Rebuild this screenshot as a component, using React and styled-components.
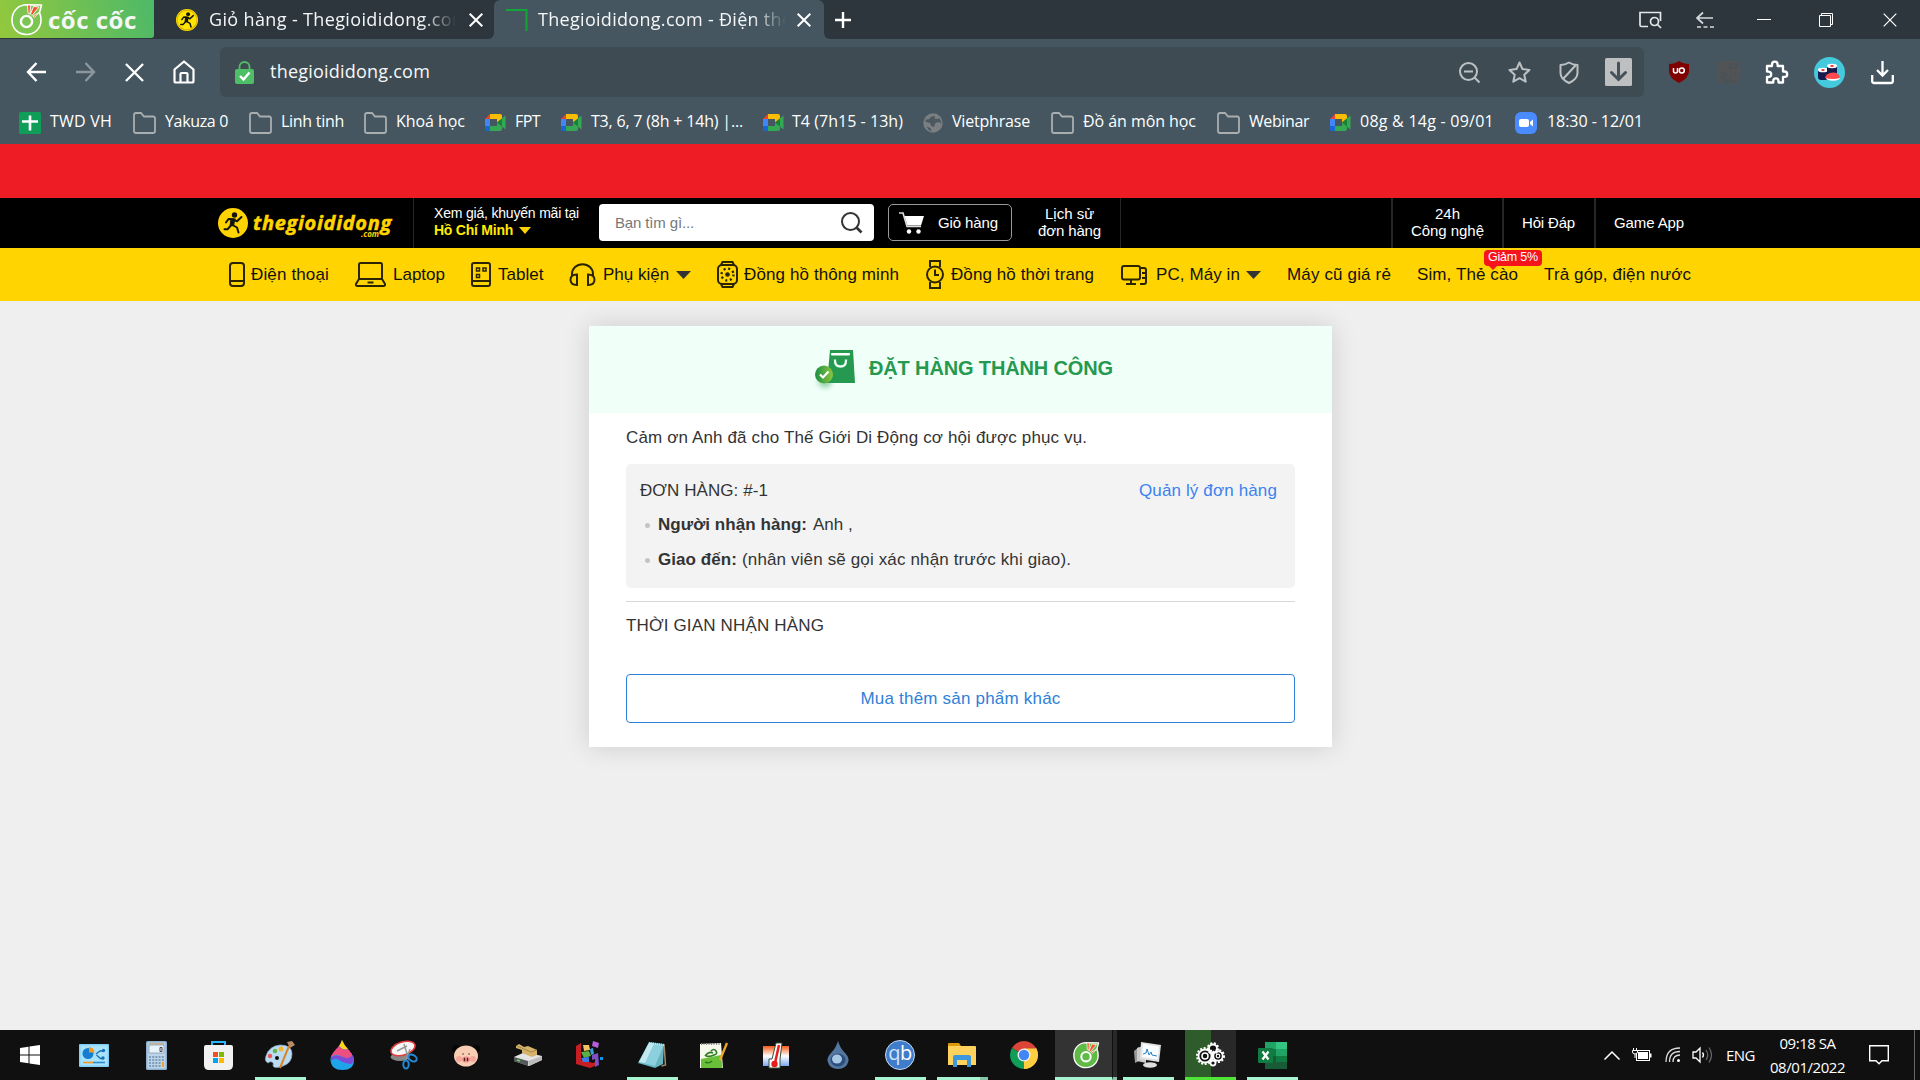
import React from "react";
import styled, { createGlobalStyle } from "styled-components";

const ui = `"Open Sans", "Noto Sans", sans-serif`;
const web = `"Liberation Sans", Arial, sans-serif`;

const Global = createGlobalStyle`
  * { box-sizing: border-box; }
  body { margin: 0; background: #efefef; overflow: hidden; }
  svg { display: block; flex: none; overflow: visible; }
`;
const Screen = styled.div`
  width: 1920px; height: 1080px; display: flex; flex-direction: column; overflow: hidden;
  background: #efefef; font-family: ${web};
`;
const Label = styled.span`
  display: block; flex: none; white-space: pre;
  width: ${(p) => p.$w}px; margin-left: ${(p) => p.$ml || 0}px; margin-top: ${(p) => p.$mt || 0}px;
  font-size: ${(p) => p.$fs}px; letter-spacing: ${(p) => p.$ls || 0}px;
  font-weight: ${(p) => (p.$bold ? 700 : 400)};
  color: ${(p) => p.$c || "inherit"}; line-height: ${(p) => p.$lh || 1.4};
`;
const Icon = styled.svg`margin-left: ${(p) => p.$ml || 0}px; margin-top: ${(p) => p.$mt || 0}px;`;
const Ic = ({ w, h, ml, mt, vb, children, ...r }) => (
  <Icon width={w} height={h} $ml={ml} $mt={mt} viewBox={vb || `0 0 ${w} ${h}`} fill="none" {...r}>{children}</Icon>
);

/* ---------- browser ---------- */
const TabStrip = styled.div`
  height: 39px; display: flex; flex: none; font-family: ${ui}; color: #f4f6f7;
  background: linear-gradient(#2c363c 50%, #455660 50%);
`;
const BrandBack = styled.div`background: #2c363c; width: 154px; flex: none;`;
const Brand = styled.div`
  width: 154px; height: 38px; flex: none; background: linear-gradient(75deg, #94c83d, #4db968);
  border-radius: 0 0 3px 0; display: flex; align-items: flex-start;
`;
const Tab = styled.div`
  width: ${(p) => p.$w}px; flex: none; display: flex; align-items: center;
  background: ${(p) => (p.$active ? "#455660" : "#2c363c")};
  border-radius: ${(p) => (p.$active ? "6px 6px 0 0" : "0 0 6px 0")};
`;
const TabTitle = styled.div`
  width: ${(p) => p.$w}px; margin-left: ${(p) => p.$ml}px; overflow: hidden; flex: none;
  mask-image: linear-gradient(90deg, #000 ${(p) => p.$w - 34}px, transparent);
`;
const StripRest = styled.div`
  flex: 1; display: flex; align-items: center; background: #2c363c; border-radius: 0 0 0 6px;
`;
const Toolbar = styled.div`
  height: 66px; flex: none; display: flex; align-items: center; padding-left: 26px; background: #455660;
  font-family: ${ui}; color: #f6f8f9;
`;
const AddressBar = styled.div`
  width: 1424px; height: 50px; margin: 0 0 0 25px; border-radius: 6px; background: #3f4b53; display: flex;
  align-items: center; padding-left: 15px; flex: none;
`;
const Bookmarks = styled.div`
  height: 39px; flex: none; display: flex; align-items: center; padding: 0 0 5px 19px; background: #455660;
  font-family: ${ui}; color: #fff;
`;

const Runner = ({ s, ml, mt, bg = "#ffd400", shade }) => (
  <Ic w={s} h={s} ml={ml} mt={mt} vb="0 0 30 30">
    <circle cx="15" cy="15" r="15" fill={bg} />
    {shade && <circle cx="15" cy="15" r="13.5" stroke="#e0b400" strokeWidth="1.5" />}
    <circle cx="16.500" cy="7" r="2.700" fill="#14140f" />
    <path d="M8 14.500l2.500-3.500 5 .3 3.500 2 4.500-4.300M14.500 17l4.500 2.500 1.500 5M12.500 18l-3 3.200H6.500" stroke="#14140f" strokeWidth="2" strokeLinecap="round" strokeLinejoin="round" />
    <path d="M12.500 10.500h5l-1.500 7.500-4.500.5z" fill="#14140f" />
  </Ic>
);
const CocLogo = ({ w, ml, mt, green }) => (
  <Ic w={w} h={w} ml={ml} mt={mt} vb="0 0 31 31">
    <path d="M16 .8C7 .8 1 7.500 1 16s6 14.500 14.500 14.500S30 24 30 16c0-3-.6-5.500-1.500-7.500L30.500 1z" fill={green ? "#5fbb46" : "#7cc551"} stroke="#fff" strokeWidth="1.600" strokeLinejoin="round" />
    <circle cx="15.500" cy="17.500" r="5.600" stroke="#fff" strokeWidth="2.400" />
    <path d="M16.500 1h3l-.5 9-2-1zM22.500 2.500L28 3l-7 8.500-1.500-1.500zM29 8l-6 5.500-1-1.500z" fill="#f4512c" stroke="#fff" strokeWidth=".9" />
  </Ic>
);
const X = ({ s = 14, ml, sw = 2, c = "#fff", mt }) => (
  <Ic w={s} h={s} ml={ml} mt={mt} vb="0 0 14 14" stroke={c} strokeWidth={sw}><path d="M.7.7l12.600 12.600M13.300.7L.7 13.300" /></Ic>
);
const Folder = ({ ml }) => (
  <Ic w={23} h={22} ml={ml} mt={1} stroke="#a9aeb0" strokeWidth="1.800"><path d="M1 19V3q0-2 2-2h5l3 3.500h9q2 0 2 2V19q0 2-2 2H3q-2 0-2-2z" /></Ic>
);
const Meet = ({ ml }) => (
  <Ic w={21} h={17} ml={ml} mt={1}>
    <path d="M5 0v5H0z" fill="#ea4335" /><path d="M0 5h5v7H0z" fill="#4285f4" /><path d="M0 12h5v5H1.500Q0 17 0 15.500z" fill="#1967d2" />
    <path d="M5 0h10q2 0 2 2v3.500L12 8.500V5H5z" fill="#fbbc04" /><path d="M5 12h7V8.500l5 3.500v3q0 2-2 2H5z" fill="#34a853" />
    <path d="M12 8.500l8.500-7V15.500z" fill="#34a853" /><path d="M12 8.500l5-4v8z" fill="#188038" />
  </Ic>
);
const Sheet = () => (
  <Ic w={22} h={22} mt={1}><rect width="22" height="22" rx="1.500" fill="#0f9d58" /><path d="M11 3.500v15M3 9.500h16" stroke="#fff" strokeWidth="2.600" /></Ic>
);
const Globe = ({ ml }) => (
  <Ic w={20} h={20} ml={ml} mt={1}><circle cx="10" cy="10" r="9.700" fill="#7b7f81" />
    <path d="M2.500 6.500Q6 7 7 5t5-2q-1 3 1 3l3.500-.5q1.500 2 2 5l-3-1.500-3 1-1.500 4-3-1q0-3-2.500-3.500-3.500 0-3-3zM3.500 13.500l4 1.500 1 3.500q-3.500-1.500-5-5z" fill="#4c585f" /></Ic>
);
const ZoomCam = ({ ml }) => (
  <Ic w={22} h={22} ml={ml} mt={1}><rect width="22" height="22" rx="6" fill="#4a8cff" /><rect x="4" y="7" width="10" height="8" rx="2" fill="#fff" /><path d="M15 10l3-2.500v7L15 12z" fill="#fff" /></Ic>
);

/* icon, gap before icon, text, text width, gap before text, letter spacing */
const bookmarks = [
  [Sheet, 0, "TWD VH", 62, 9, 0.22], [Folder, 21, "Yakuza 0", 63, 9, -0.34], [Folder, 21, "Linh tinh", 63, 9, -0.28],
  [Folder, 20, "Khoá học", 69, 9, -0.05], [Meet, 20, "FPT", 25, 9, -0.57], [Meet, 21, "T3, 6, 7 (8h + 14h) |...", 152, 9, -0.19],
  [Meet, 20, "T4 (7h15 - 13h)", 111, 8, 0.04], [Globe, 20, "Vietphrase", 78, 9, -0.19], [Folder, 21, "Đồ án môn học", 113, 9, -0.06],
  [Folder, 21, "Webinar", 60, 9, -0.4], [Meet, 21, "08g & 14g - 09/01", 134, 9, 0.24], [ZoomCam, 21, "18:30 - 12/01", 95, 10, -0.05],
];

function Browser() {
  return (
    <>
      <TabStrip>
        <BrandBack>
          <Brand>
            <CocLogo w={31} ml={11} mt={4} />
            <Label $fs={24} $w={92} $ml={6} $mt={3} $bold $ls={0.5} $lh={1.4}>cốc cốc</Label>
          </Brand>
        </BrandBack>
        <Tab $w={340}>
          <Runner s={22} ml={22} shade bg="#ffe600" />
          <TabTitle $w={247} $ml={11}><Label $fs={18} $w={280} $ls={0.36}>Giỏ hàng - Thegioididong.com</Label></TabTitle>
          <X ml={13} />
        </Tab>
        <Tab $w={330} $active>
          <Ic w={22} h={22} ml={12}><path d="M0 1h20.500v21" stroke="#13a538" strokeWidth="2" /></Ic>
          <TabTitle $w={248} $ml={10}><Label $fs={18} $w={280} $ls={0.3}>Thegioididong.com - Điện thoại</Label></TabTitle>
          <X ml={11} />
        </Tab>
        <StripRest>
          <Ic w={16} h={16} ml={11} stroke="#fff" strokeWidth="2.400"><path d="M8 0v16M0 8h16" /></Ic>
          <Ic w={23} h={18} ml={788} stroke="#e4e8ea" strokeWidth="1.700"><path d="M9 15.500H2.500Q1 15.500 1 14V1.500h20.500V10" /><circle cx="15.500" cy="10.500" r="4" /><path d="M18.500 13.500l3.500 3.500" /></Ic>
          <Ic w={18} h={16} ml={34} mt={1} stroke="#d5dadd" strokeWidth="1.700"><path d="M17 6H1M7 .5L1 6l6 5.500" /><path d="M1 15h17" strokeDasharray="4 2.500" /></Ic>
          <Ic w={14} h={2} ml={43}><path d="M0 .5h14" stroke="#fff" /></Ic>
          <Ic w={14} h={14} ml={48} stroke="#fff"><path d="M.5 2.500h11v11H.5zM2.500 2.500v-2h11v11h-2" /></Ic>
          <X ml={50} sw={1.200} />
        </StripRest>
      </TabStrip>
      <Toolbar>
        <Ic w={20} h={20} stroke="#fff" strokeWidth="2.400"><path d="M20 10H2M10.500 1L2 10l8.500 9" /></Ic>
        <Ic w={20} h={20} ml={30} stroke="#8c979d" strokeWidth="2.400"><path d="M0 10h18M9.500 1l8.500 9-8.500 9" /></Ic>
        <X s={19} ml={29} sw={1.700} />
        <Ic w={22} h={24} ml={29} stroke="#fff" strokeWidth="2.200"><path d="M1.500 9.500L11 1.500l9.500 8V21q0 1.500-1.500 1.500H3q-1.500 0-1.500-1.500z" strokeLinejoin="round" /><path d="M7.500 22v-8q0-1 1-1h5q1 0 1 1v8" /></Ic>
        <AddressBar>
          <Ic w={19} h={23}><path d="M4.500 10V6a5 5 0 0 1 10 0v4" stroke="#4fbf67" strokeWidth="1.800" /><rect y="8" width="19" height="15" rx="2" fill="#4fbf67" /><path d="M5 15l3.500 3.500 6-7" stroke="#fff" strokeWidth="2.400" /></Ic>
          <Label $fs={18} $w={160} $ml={16} $ls={0.22}>thegioididong.com</Label>
          <Ic w={21} h={21} ml={1029} stroke="#bcc1c3" strokeWidth="2"><circle cx="9.500" cy="9.500" r="8.500" /><path d="M5 9.500h9M15.500 15.500l5 5" /></Ic>
          <Ic w={23} h={22} ml={28} stroke="#bcc1c3" strokeWidth="2" strokeLinejoin="round"><path d="M11.500 1.500l3 6.600 7 .8-5.200 4.800 1.400 7-6.200-3.500-6.200 3.500 1.400-7L1.500 8.900l7-.8z" /></Ic>
          <Ic w={20} h={23} ml={28} stroke="#bcc1c3" strokeWidth="2" strokeLinejoin="round"><path d="M10 1.500q4 2.500 8.500 2.500v8q0 6-8.500 10-8.500-4-8.500-10V4Q6 4 10 1.500zM4 18L16.500 4.500" /></Ic>
          <Ic w={27} h={28} ml={26}><rect width="27" height="28" rx="1.500" fill="#bdbfc0" /><path d="M13.500 5v16M6.500 14.500l7 7 7-7" stroke="#46525a" strokeWidth="3" strokeLinecap="round" /></Ic>
        </AddressBar>
        <Ic w={20} h={22} ml={25}><path d="M10 0q4 3 10 3v7q0 7-10 12Q0 17 0 10V3q6 0 10-3z" fill="#800000" /><path d="M4.500 7v3q0 2 2 2t2-2V7" stroke="#fff" strokeWidth="1.500" /><circle cx="12.800" cy="9.500" r="2.500" stroke="#fff" strokeWidth="1.500" /></Ic>
        <Ic w={22} h={22} ml={29}><rect width="22" height="22" fill="#525354" /><path d="M12 3h7v4h-7zM3.500 12.500q4-2 5 0t-4 2.500 4 4-5 0M13 13q-2 3 0 6t6 0M19 13h-4" stroke="#485259" strokeWidth="1.400" /></Ic>
        <Ic w={24} h={24} ml={25} stroke="#fff" strokeWidth="2.300" strokeLinejoin="round"><path d="M2 6h5V4.500a2.800 2.800 0 0 1 5.600 0V6H18v5.500h1.500a2.700 2.700 0 0 1 0 5.400H18V22.500h-4.500V21a2.600 2.600 0 0 0-5.200 0v1.500H2V17h1.500a2.700 2.700 0 0 0 0-5.400H2z" /></Ic>
        <Ic w={31} h={31} ml={25}>
          <circle cx="15.500" cy="15.500" r="15.500" fill="#45c9dc" />
          <rect x="4" y="12" width="10" height="11" rx="3" fill="#171b4c" /><ellipse cx="9" cy="13" rx="5" ry="2.300" fill="#fff" /><ellipse cx="9" cy="13" rx="1.800" ry="1" fill="#e33" />
          <rect x="13" y="8" width="10" height="10" rx="3" fill="#171b4c" /><ellipse cx="18" cy="9" rx="5" ry="2.200" fill="#fff" /><ellipse cx="18" cy="9" rx="1.800" ry="1" fill="#e33" />
          <ellipse cx="19" cy="21" rx="7" ry="2.800" fill="#fff" /><path d="M11 21q1-5 8-5.500 6 0 7 5.500-7 2-15 0z" fill="#ff4a4d" />
        </Ic>
        <Ic w={23} h={23} ml={26} stroke="#fff" strokeWidth="2.300"><path d="M11.500 0v14M6 9l5.500 5.500L17 9M1.200 14v6q0 2 2 2h16.600q2 0 2-2v-6" /></Ic>
      </Toolbar>
      <Bookmarks>
        {bookmarks.map(([I, ml, text, w, gap, ls]) => (
          <React.Fragment key={text}>
            <I ml={ml} />
            <Label $fs={16} $w={w} $ml={gap} $mt={-1} $ls={ls}>{text}</Label>
          </React.Fragment>
        ))}
      </Bookmarks>
    </>
  );
}

/* ---------- site ---------- */
const Promo = styled.div`height: 54px; flex: none; background: #ee1c25;`;
const SiteHeader = styled.header`
  height: 50px; flex: none; background: #000; color: #fff; display: flex; align-items: center; padding-left: 218px;
`;
const Wordmark = styled.div`
  width: 139px; margin: 2px 0 0 5px; flex: none; color: #ffd400; display: flex; flex-direction: column;
  font-family: "Open Sans", sans-serif; font-style: italic; -webkit-text-stroke: 0.5px #ffd400;
`;
const DotCom = styled.span`font-size: 8px; font-weight: 700; line-height: 8px; margin: -3px 0 0 108px; height: 5px; -webkit-text-stroke: 0;`;
const Divider = styled.div`width: ${(p) => p.$t || 1}px; height: 50px; flex: none; background: #262626; margin-left: ${(p) => p.$ml}px;`;
const Stack = styled.div`
  display: flex; flex-direction: column; flex: none; align-items: ${(p) => (p.$center ? "center" : "flex-start")};
  width: ${(p) => p.$w}px; margin-left: ${(p) => p.$ml}px; margin-top: -2px;
`;
const Line = styled.div`display: flex; align-items: center; height: 17px;`;
const Search = styled.div`
  width: 275px; height: 37px; margin: -1px 0 0 20px; border-radius: 4px; background: #fff; display: flex; align-items: center; flex: none;
  padding-left: 16px;
`;
const CartButton = styled.div`
  width: 124px; height: 37px; margin: -1px 0 0 14px; border-radius: 5px; border: 1px solid #999; display: flex; align-items: center; flex: none;
  padding-left: 10px;
`;
const Nav = styled.nav`
  height: 53px; flex: none; background: #ffd400; color: #111; display: flex; align-items: center; padding-left: 229px;
`;
const BadgeAnchor = styled.div`position: relative; flex: none; margin-left: 26px;`;
const Badge = styled.div`
  position: absolute; left: 67px; top: -13px; width: 58px; height: 16px; border-radius: 4px; background: #f5141c; color: #fff;
  display: flex; align-items: center; padding-left: 4px;
  &::after { content: ""; position: absolute; left: 5px; top: 16px; border: 4px solid transparent; border-top: 4px solid #f5141c; border-bottom: 0; }
`;
const Caret = ({ ml, w = 15, c = "#333", h = 8 }) => <Ic w={w} h={h} ml={ml}><path d={`M0 0h${w}L${w / 2} ${h}z`} fill={c} /></Ic>;
const dark = { stroke: "#2b2400", strokeWidth: 2 };

function Site() {
  return (
    <>
      <Promo />
      <SiteHeader>
        <Runner s={30} />
        <Wordmark><Label $fs={20} $w={139} $bold $lh={1} $ls={0.68}>thegioididong</Label><DotCom>.com</DotCom></Wordmark>
        <Divider $ml={21} />
        <Stack $w={145} $ml={20}>
          <Line><Label $fs={14} $w={145} $ls={-0.19}>Xem giá, khuyến mãi tại</Label></Line>
          <Line><Label $fs={14} $w={79} $bold $c="#ffea00" $ls={-0.24}>Hồ Chí Minh</Label><Caret ml={6} w={12} h={7} c="#ffd400" /></Line>
        </Stack>
        <Search>
          <Label $fs={15} $w={79} $c="#777" $ls={-0.14}>Bạn tìm gì...</Label>
          <Ic w={21} h={21} ml={147} stroke="#333" strokeWidth="2"><circle cx="9.500" cy="9.500" r="8.500" /><path d="M15.500 15.500l5 5" strokeWidth="2.600" /></Ic>
        </Search>
        <CartButton>
          <Ic w={25} h={22}><path d="M0 1h4l4 13.500h14" stroke="#ddd" strokeWidth="1.600" /><path d="M5.500 4H25l-3 9.500H8.500z" fill="#fff" /><circle cx="10" cy="19.500" r="2.200" fill="#fff" /><circle cx="19.500" cy="19.500" r="2.200" fill="#fff" /></Ic>
          <Label $fs={15} $w={60} $ml={14} $ls={-0.11}>Giỏ hàng</Label>
        </CartButton>
        <Stack $w={63} $ml={26} $center>
          <Line><Label $fs={15} $w={49}>Lịch sử</Label></Line>
          <Line><Label $fs={15} $w={63} $ls={-0.13}>đơn hàng</Label></Line>
        </Stack>
        <Divider $ml={19} />
        <Divider $ml={270} $t={2} />
        <Stack $w={73} $ml={18} $center>
          <Line><Label $fs={15} $w={25}>24h</Label></Line>
          <Line><Label $fs={15} $w={73} $ls={-0.05}>Công nghệ</Label></Line>
        </Stack>
        <Divider $ml={18} $t={2} />
        <Label $fs={15} $w={53} $ml={18} $mt={-2} $ls={-0.17}>Hỏi Đáp</Label>
        <Divider $ml={19} $t={2} />
        <Label $fs={15} $w={70} $ml={18} $mt={-2} $ls={-0.11}>Game App</Label>
      </SiteHeader>
      <Nav>
        <Ic w={16} h={25} {...dark}><rect x="1" y="1" width="14" height="23" rx="3" /><path d="M1 19h14" /></Ic>
        <Label $fs={17} $w={78} $ml={6} $ls={0.14}>Điện thoại</Label>
        <Ic w={31} h={25} ml={26} {...dark}><path d="M4 17V2.500Q4 1 5.500 1h20Q27 1 27 2.500V17L30 22q.5 2-1.500 2h-26Q.5 24 1 22zM4 17h23M12.500 20.500h6" /></Ic>
        <Label $fs={17} $w={52} $ml={7}>Laptop</Label>
        <Ic w={20} h={25} ml={26} {...dark}><rect x="1" y="1" width="18" height="23" rx="2" /><path d="M1 19h18" /><path d="M5.500 6h3v3h-3zM12 6h3v3h-3zM5.500 12.500h3v3h-3z" strokeWidth="1.500" /></Ic>
        <Label $fs={17} $w={45} $ml={7}>Tablet</Label>
        <Ic w={27} h={23} ml={26} {...dark}><path d="M3 13V11a10.500 9.800 0 0 1 21 0v2M8 11.500v10.500q-6.500 0-6.500-5.200T8 11.500zM19 11.500v10.500q6.500 0 6.500-5.200t-6.500-5.300z" /></Ic>
        <Label $fs={17} $w={66} $ml={7}>Phụ kiện</Label>
        <Caret ml={7} />
        <Ic w={21} h={27} ml={26} {...dark}><rect x="1" y="4" width="19" height="19" rx="4" /><path d="M4 4L5.500 1h10L17 4M4 23l1.500 3h10l1.500-3" /><circle cx="10.500" cy="13.500" r="2.300" fill="#2b2400" strokeWidth="0" /><circle cx="10.500" cy="13.500" r="6" strokeDasharray="2 2.710" strokeWidth="2.300" /></Ic>
        <Label $fs={17} $w={155} $ml={6} $ls={0.11}>Đồng hồ thông minh</Label>
        <Ic w={18} h={29} ml={27} {...dark}><circle cx="9" cy="14.500" r="8" /><path d="M4 7V1h10v6M4 22v6h10v-6M9 9.500v5.500h4" /></Ic>
        <Label $fs={17} $w={143} $ml={7} $ls={0.08}>Đồng hồ thời trang</Label>
        <Ic w={28} h={20} ml={27} {...dark}><rect x="1" y="1" width="18" height="13.500" rx="2" /><path d="M10 14.500V19M5 19h10M20 3h3q2 0 2 2v12q0 2-2 2h-4M21 8h4M21 13h4" /></Ic>
        <Label $fs={17} $w={84} $ml={7} $ls={0.09}>PC, Máy in</Label>
        <Caret ml={6} />
        <Label $fs={17} $w={104} $ml={26} $ls={0.15}>Máy cũ giá rẻ</Label>
        <BadgeAnchor>
          <Label $fs={17} $w={101} $ls={0.1}>Sim, Thẻ cào</Label>
          <Badge><Label $fs={12.5} $w={50} $ls={-0.2}>Giảm 5%</Label></Badge>
        </BadgeAnchor>
        <Label $fs={17} $w={147} $ml={26} $ls={0.13}>Trả góp, điện nước</Label>
      </Nav>
    </>
  );
}

const Main = styled.main`flex: 1; display: flex; justify-content: center; align-items: flex-start; padding: 25px 0 0 1px;`;
const Card = styled.section`
  width: 743px; height: 421px; background: #fff; box-shadow: 0 0 25px rgba(0, 0, 0, 0.14); color: #333;
  display: flex; flex-direction: column; padding: 0 37px;
`;
const CardHead = styled.div`
  height: 87px; margin: 0 -37px; background: #f0fff8; display: flex; align-items: center; padding-left: 226px; color: #24994f; flex: none;
`;
const OrderBox = styled.div`
  height: 124px; flex: none; border-radius: 5px; background: #f3f3f3; margin-top: 2px; padding: 10px 18px 0 14px;
`;
const Row = styled.div`display: flex; align-items: center; height: ${(p) => p.$h}px; flex: none; justify-content: ${(p) => (p.$between ? "space-between" : "flex-start")};`;
const Bullet = styled.i`width: 5px; height: 5px; border-radius: 50%; background: #c4c4c4; margin: 0 8px 0 5px; flex: none;`;
const Rule = styled.hr`border: 0; height: 1px; width: 100%; background: #d8d8d8; margin: 13px 0 0; flex: none;`;
const MoreButton = styled.button`
  height: 49px; width: 100%; margin-top: 25px; background: #fff; border: 1px solid #2f80d8; border-radius: 4px; color: #2f80d8; font-family: ${web};
  display: flex; align-items: center; justify-content: center; padding: 0; flex: none;
`;
function Order() {
  return (
    <Main>
      <Card>
        <CardHead>
          <Ic w={40} h={42} mt={2}>
            <defs><linearGradient id="tick"><stop offset="0" stopColor="#1b8f45" /><stop offset="1" stopColor="#8cc63a" /></linearGradient>
              <filter id="soft" x="-50%" y="-50%" width="200%" height="200%"><feGaussianBlur stdDeviation="2.500" /></filter></defs>
            <path d="M15 0h23l2 33H12z" fill="#24994f" /><rect x="16" y="3" width="19" height="2.500" rx="1" fill="#fff" />
            <path d="M20 9.500v1q0 6 5.500 6t5.500-6v-1" stroke="#eafff3" strokeWidth="2.300" />
            <circle cx="10" cy="31" r="7" fill="#24994f" opacity=".4" filter="url(#soft)" />
            <circle cx="9" cy="24.500" r="9" fill="url(#tick)" /><path d="M5 24.500l3 3 5.500-6" stroke="#fff" strokeWidth="2.200" />
          </Ic>
          <Label $fs={20} $w={244} $ml={14} $mt={-3} $bold $ls={-0.14}>ĐẶT HÀNG THÀNH CÔNG</Label>
        </CardHead>
        <Row $h={49}><Label $fs={17} $w={461} $ls={0.14}>Cảm ơn Anh đã cho Thế Giới Di Động cơ hội được phục vụ.</Label></Row>
        <OrderBox>
          <Row $h={34} $between><Label $fs={17} $w={128} $ls={0.08}>ĐƠN HÀNG: #-1</Label><Label $fs={17} $w={138} $c="#3b82f0" $ls={0.13}>Quản lý đơn hàng</Label></Row>
          <Row $h={34}><Bullet /><Label $fs={17} $w={149} $bold $ls={0.06}>Người nhận hàng:</Label><Label $fs={17} $w={40} $ml={6}>Anh ,</Label></Row>
          <Row $h={36}><Bullet /><Label $fs={17} $w={79} $bold $ls={0.07}>Giao đến:</Label><Label $fs={17} $w={329} $ml={5} $ls={0.14}>(nhân viên sẽ gọi xác nhận trước khi giao).</Label></Row>
        </OrderBox>
        <Rule />
        <Row $h={47}><Label $fs={17} $w={198} $ls={0.16}>THỜI GIAN NHẬN HÀNG</Label></Row>
        <MoreButton><Label $fs={17} $w={200} $ls={0.2}>Mua thêm sản phẩm khác</Label></MoreButton>
      </Card>
    </Main>
  );
}

/* ---------- taskbar ---------- */
const Taskbar = styled.footer`height: 50px; flex: none; display: flex; align-items: stretch; background: #101010; color: #fff; font-family: ${ui};`;
const Slot = styled.div`
  width: ${(p) => (p.$first ? 60 : 62)}px; margin-right: ${(p) => (p.$first ? 3 : 0)}px; flex: none; display: flex; justify-content: center; align-items: stretch;
`;
const Cell = styled.div`
  width: ${(p) => (p.$wide ? 57 : 51)}px; display: flex; align-items: center; justify-content: center; flex: none;
  background: ${(p) => p.$bg || "transparent"}; border-bottom: 3px solid ${(p) => p.$line || "transparent"}; padding-top: 3px;
  padding-left: ${(p) => (p.$wide ? 4 : 0)}px;
  ${(p) => p.$grouped && "border-image: linear-gradient(90deg, #a6f4d0 80%, #86c5a8 80%) 3;"}
`;
const Stacked = styled.div`width: 5px; flex: none; background: #292929; border-left: 1px solid #101010; border-bottom: 3px solid #86c5a8;`;
const Tray = styled.div`flex: 1; display: flex; align-items: center; padding-left: 301px;`;
const Clock = styled.div`width: 75px; margin-left: 16px; display: flex; flex-direction: column; align-items: center; gap: 1px; flex: none;`;
const Edge = styled.div`width: 1px; height: 50px; background: #666; margin-left: 25px;`;
const QbDisc = styled.div`
  width: 30px; height: 30px; border-radius: 50%; background: #3f7cc9; border: 1.5px solid #c3dbf5; color: #cfe4fb;
  font: 20px/23px "Open Sans", sans-serif; text-align: center; letter-spacing: -0.5px;
  b { font-weight: 400; color: #fff; }
`;

const mint = "#a6f4d0";
const apps = [
  { icon: <Ic w={20} h={20}><path d="M0 3l8.500-1.300v7.800H0zM9.500 1.500L20 0v9.500H9.500zM0 10.500h8.500v7.800L0 17zM9.500 10.500H20V20L9.500 18.500z" fill="#fff" /></Ic> },
  { icon: <Ic w={30} h={23}><rect width="30" height="23" rx="1" fill="#7fd0f7" /><rect x="1.500" y="1.500" width="27" height="20" fill="#a9e2fb" /><circle cx="9" cy="9.500" r="5.500" fill="#167ed0" /><path d="M10 8.500V3a5.500 5.500 0 0 1 5.500 5.500z" fill="#f39a1d" /><path d="M17 10l4-3h4M17.500 11l4 3.500h3" stroke="#1571ba" strokeWidth="1.300" /><circle cx="24.500" cy="6.500" r="1.700" fill="#1571ba" /><circle cx="24" cy="14" r="1.700" fill="#1571ba" /><path d="M4 18.500h10" stroke="#f39a1d" strokeWidth="1.600" /><path d="M14 18.500h12" stroke="#2a8bd0" strokeWidth="1.600" /></Ic> },
  { icon: <Ic w={21} h={29}><rect width="21" height="29" rx="1.500" fill="#8fb0cf" /><rect x="1.500" y="1.500" width="18" height="26" fill="#bcd5ea" /><rect x="3" y="4" width="15" height="8" fill="#e8f3fb" stroke="#6d8296" strokeWidth=".6" /><path d="M3 2.800h15" stroke="#d0a060" /><path d="M14 6.500h2v4h-2z" stroke="#445" /><path d="M3 16h15M3 19h15M3 22h12M3 25h12" stroke="#7f9cb8" strokeWidth="2" strokeDasharray="2 1.200" /><path d="M17 21v5" stroke="#f0a030" strokeWidth="2" /></Ic> },
  { icon: <Ic w={29} h={29}><path d="M8 5V1h13v4" stroke="#29b6f6" strokeWidth="2" /><path d="M0 6q0-2 2-2h25q2 0 2 2v18q0 5-5 5H5q-5 0-5-5z" fill="#f1f1f1" /><path d="M9 11h5v5H9z" fill="#f25022" /><path d="M15 11h5v5h-5z" fill="#7fba00" /><path d="M9 17h5v5H9z" fill="#00a4ef" /><path d="M15 17h5v5h-5z" fill="#ffb900" /></Ic> },
  { icon: <Ic w={30} h={28}><path d="M1 15Q4 5 15 4q12 0 12 9t-9 12q-8 3-10 0 1-3-1-4t-4 1q-4-2-2-7z" fill="#b9dcf2" stroke="#86aac6" strokeWidth=".7" /><circle cx="12" cy="17" r="2" fill="#101010" /><circle cx="5" cy="15" r="2.200" fill="#e55" /><circle cx="10" cy="10" r="2.300" fill="#64b64c" /><circle cx="16" cy="8" r="2.500" fill="#f7b731" /><path d="M15 27L24 5" stroke="#d98527" strokeWidth="2" /><path d="M22 1l5-1 3 4-5 3z" fill="#b98d63" /></Ic>, line: mint },
  { icon: <Ic w={24} h={30}><path d="M12 0q2 6 7 11 5 5 5 9 0 10-11.500 10T.5 20Q0 16 5 11q6-6 7-11z" fill="#1ea4e9" /><path d="M9 6q2-3 3-6 2 5 6 9-4 2-9-3z" fill="#ffd21f" /><path d="M9 6q4 5 9 3l4 5q-2 7-9 3T1 17q1-4 8-11z" fill="#ee4f80" /><path d="M1 17q6-3 12 0t10-2q2 7-2 9-8-1-12-4t-8 1z" fill="#7d4bd8" /></Ic> },
  { icon: <Ic w={28} h={28}><ellipse cx="10" cy="16" rx="9.500" ry="4" fill="#888" /><ellipse cx="13" cy="7.500" rx="12.500" ry="6.500" transform="rotate(-18 13 7.500)" fill="#f7f7f7" stroke="#e23d3d" strokeWidth="1.500" /><path d="M7 10l10-5M14 3l5 16M20 8l-4 11" stroke="#999" strokeWidth="1.500" /><ellipse cx="22.500" cy="17" rx="4.500" ry="3" stroke="#2389d6" strokeWidth="2" transform="rotate(30 22.500 17)" /><ellipse cx="16" cy="23.500" rx="2.700" ry="4" stroke="#2389d6" strokeWidth="2" /></Ic> },
  { icon: <Ic w={28} h={24}><circle cx="4" cy="6" r="4" fill="#050505" /><circle cx="24" cy="6" r="4" fill="#050505" /><ellipse cx="14" cy="13" rx="12" ry="10.500" fill="#f7cdb4" /><circle cx="7" cy="16" r="3" fill="#f5a79c" /><circle cx="21" cy="16" r="3" fill="#f5a79c" /><ellipse cx="14" cy="16.500" rx="4" ry="3" fill="#ee8a88" /><path d="M12.500 15.500v2M15.500 15.500v2M11 11h.1M17 11h.1" stroke="#4d2018" strokeWidth="1.300" strokeLinecap="round" /></Ic> },
  { icon: <Ic w={28} h={24}><path d="M0 14l11-5 17 4v4l-13 6-15-5z" fill="#e4e4e4" /><path d="M0 14l14 4v5L0 18z" fill="#55595b" /><path d="M14 18l14-5v4l-13 6z" fill="#bbb" /><path d="M2 3l3-2 5 3 4-1 9 4v5l-5 2-10-4V7L2 5z" fill="#d5b36b" /><path d="M3 3l14 6 6-2" stroke="#a98643" /><path d="M3 17l3 1" stroke="#5ddb42" strokeWidth="1.500" /></Ic> },
  { icon: <Ic w={28} h={28}><path d="M0 5l5-3v17l12 3 4-2v4l-7 3L0 23z" fill="#c51f25" /><path d="M7 4h6l1 5-6 1z" fill="#f5c164" /><path d="M17 0l6 2-1 5-6-2z" fill="#b75cdb" /><path d="M5 11l8-1 2 5-7 2z" fill="#5ab045" /><path d="M5 17l8-1v5H7z" fill="#3b7de5" /><path d="M14 8l3-1 1 6-3 1z" fill="#35a0d8" /><path d="M16 14l6-2 1 12-4 2v-8l-3 1z" fill="#814fc4" /><path d="M24 16h3v3h-3z" fill="#0998e8" /></Ic> },
  { icon: <Ic w={29} h={26}><path d="M11 0l15 2-1 20-8 4L0 21z" fill="#65b4c1" /><path d="M11 1l15 2-9 21L1 20z" fill="#8bd0dc" /><path d="M11 1l5 .5L7 21l-6-1z" fill="#c4eaf0" /><path d="M26 2l1.500 21-4 1" stroke="#9e8a69" strokeWidth="1.500" /><path d="M11 1l15 2" stroke="#ddd" strokeWidth="2" strokeDasharray="1 1" /></Ic>, line: mint },
  { icon: <Ic w={28} h={27}><path d="M0 2l21-1 2 25H0z" fill="#f6faec" /><path d="M1 17l20-4 1.500 13H1z" fill="#69bf37" /><path d="M5 14q4-5 8-3M11 9q3-3 5 0t-2 4q-4 2-8 1M5 20q4 2 7-1" stroke="#2f7c20" strokeWidth="1.600" /><path d="M1 2h20" stroke="#888" strokeDasharray="1 1.500" strokeWidth="2" /><path d="M20 18L27 1" stroke="#f3a52a" strokeWidth="2.300" /></Ic> },
  { icon: <Ic w={26} h={27}><defs><linearGradient id="heat" x2="0" y2="1"><stop stopColor="#f15a18" /><stop offset=".5" stopColor="#fff" /><stop offset="1" stopColor="#7ba6ef" /></linearGradient></defs><path d="M0 4h26v20H0z" fill="url(#heat)" /><path d="M13 1h6l-2 16v9H6v-9h3z" fill="#fff" stroke="#31503a" strokeWidth="1" /><path d="M16 3l-4 18" stroke="#e91c1c" strokeWidth="2.500" /><circle cx="11.500" cy="22" r="3.200" fill="#e91c1c" /></Ic> },
  { icon: <Ic w={22} h={28}><path d="M11 0q2 7 7 12 4 4 3.500 8-2 8-10.500 8T.5 20Q0 16 4 12q5-5 7-12z" fill="#54779f" /><ellipse cx="11" cy="19" rx="7.500" ry="6.500" fill="#2b4e7b" /><ellipse cx="10" cy="18" rx="5" ry="4.500" fill="#a8c8e6" /></Ic> },
  { icon: <QbDisc>q<b>b</b></QbDisc>, line: mint },
  { icon: <Ic w={28} h={24}><path d="M0 1q0-1 1-1h10l2 3H0z" fill="#dc9a0a" /><path d="M0 3h27q1 0 1 1v18H0z" fill="#ffd35b" /><path d="M5 24V14q0-2 2-2h14q2 0 2 2v10h-4v-7H9v7z" fill="#3c97dc" /></Ic>, line: mint, grouped: true },
  { icon: <Ic w={28} h={28}><path d="M14 14L1.900 7A14 14 0 0 1 26.100 7z" fill="#db4437" /><path d="M14 14L26.100 7A14 14 0 0 1 14 28z" fill="#ffcd40" /><path d="M14 14l0 14A14 14 0 0 1 1.900 7z" fill="#0f9d58" /><path d="M14 7.500h12.300A14 14 0 0 1 14 28l5.800-10.500z" fill="#ffcd40" /><circle cx="14" cy="14" r="6.500" fill="#f1f1f1" /><circle cx="14" cy="14" r="5.200" fill="#4285f4" /></Ic> },
  { icon: <CocLogo w={26} green />, line: mint, bg: "#333", windows: true },
  { icon: <Ic w={28} h={26}><path d="M0 9l5-4v14l-4 2z" fill="#999" /><path d="M3 6l9-3v18l-9-2z" fill="#ccc" /><path d="M7 0l20 3-2 17-19-3z" fill="#e2e2e2" /><path d="M9 2l16 2.500-1.500 13L8 15z" fill="#f9fdff" /><path d="M9 12l3-1 1-4 2 6 2-3 1 3 5 1" stroke="#2684c6" /><ellipse cx="16" cy="23" rx="7" ry="2.800" fill="#ddd" /></Ic>, line: mint },
  { icon: <Ic w={28} h={24}><g stroke="#fff" strokeWidth="1.800" fill="#111"><circle cx="9" cy="13" r="6.500" /><circle cx="17" cy="5.500" r="4" /><circle cx="22" cy="13" r="4.700" /><circle cx="17" cy="20" r="2.500" /></g><g stroke="#fff" strokeWidth="2" strokeDasharray="2 1.600"><circle cx="9" cy="13" r="8" /><circle cx="17" cy="5.500" r="5.300" /><circle cx="22" cy="13" r="6" /></g><circle cx="9" cy="13" r="3" stroke="#fff" strokeWidth="1.500" /><circle cx="22" cy="13" r="1.800" stroke="#fff" strokeWidth="1.200" /></Ic>, line: "#4ee536", bg: "linear-gradient(90deg, #2f5c2b 50%, #282828 50%)" },
  { icon: <Ic w={29} h={27}><path d="M7 0h22v27H7z" fill="#185c37" /><path d="M7 0h11v7H7z" fill="#21a366" /><path d="M18 0h11v7H18z" fill="#33c481" /><path d="M7 7h11v7H7zM18 14h11v6H18z" fill="#107c41" /><path d="M18 7h11v7H18z" fill="#21a366" /><rect y="6" width="15" height="15" rx="1" fill="#107c41" /><path d="M4.500 9.500l6 8M10.500 9.500l-6 8" stroke="#fff" strokeWidth="2.200" /></Ic>, line: mint },
];

function Bar() {
  return (
    <Taskbar>
      {apps.map((app, i) => (
        <Slot key={i} $first={i === 0}>
          <Cell $line={app.line} $bg={app.bg} $grouped={app.grouped} $wide={app.windows}>{app.icon}</Cell>
          {app.windows && <Stacked />}
        </Slot>
      ))}
      <Tray>
        <Ic w={16} h={9} stroke="#fff" strokeWidth="1.500"><path d="M.5 8.500L8 1l7.500 7.500" /></Ic>
        <Ic w={20} h={14} ml={12}><rect x="4.500" y="2.500" width="13" height="10" stroke="#fff" /><path d="M6 4h10v7H6zM18 5.500h1.500v4H18z" fill="#fff" /><path d="M1.500 0v2.500M4.500 0v2.500M.5 2.500h5v1.500q0 2-2.500 2T.5 4zM3 6v4" stroke="#fff" fill="#101010" /></Ic>
        <Ic w={16} h={16} ml={13} stroke="#ddd" strokeWidth="1.300"><path d="M1 15Q1 1 15 1M4.500 15q0-10.500 10.500-10.500M8 15q0-7 7-7" /><circle cx="13.500" cy="13.500" r="1.500" fill="#fff" stroke="none" /></Ic>
        <Ic w={20} h={18} ml={11} stroke="#fff" strokeWidth="1.300"><path d="M1 6h3l4-4v14l-4-4H1zM10.500 6.500q2 2.500 0 5" /><path d="M14 4q3.500 5 0 10M17 1.500q5 7.500 0 15" stroke="#666" /></Ic>
        <Label $fs={15} $w={28} $ml={14} $ls={-0.6}>ENG</Label>
        <Clock>
          <Label $fs={15} $w={56} $lh={1.47} $ls={-0.48}>09:18 SA</Label>
          <Label $fs={15} $w={75} $lh={1.47} $ls={-0.46}>08/01/2022</Label>
        </Clock>
        <Ic w={20} h={20} ml={24} stroke="#fff" strokeWidth="1.400"><path d="M.7.7h18.600v15H13l-3 3-3-3H.7z" /></Ic>
        <Edge />
      </Tray>
    </Taskbar>
  );
}

export default function App() {
  return (
    <Screen>
      <Global />
      <Browser />
      <Site />
      <Order />
      <Bar />
    </Screen>
  );
}
